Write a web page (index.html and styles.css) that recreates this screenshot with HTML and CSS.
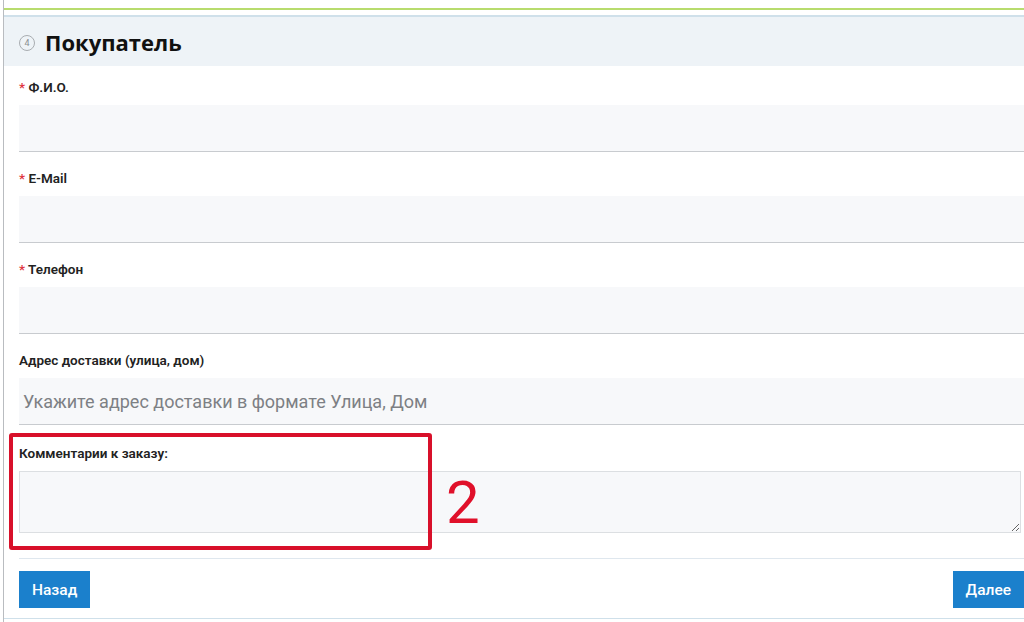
FILE: index.html
```html
<!DOCTYPE html>
<html lang="ru">
<head>
    <meta charset="UTF-8">
    <meta name="viewport" content="width=device-width, initial-scale=1.0">
    <title>Покупатель</title>
    <link rel="stylesheet" href="styles.css">
</head>
<body>
    <div class="page">
        <div class="top-strip"></div>

        <div class="section">
            <div class="section-head">
                <span class="step">4</span>
                <h2>Покупатель</h2>
            </div>

            <div class="form">
                <div class="field">
                    <label><span class="req">*</span> Ф.И.О.</label>
                    <input type="text">
                </div>
                <div class="field">
                    <label><span class="req">*</span> E-Mail</label>
                    <input type="text">
                </div>
                <div class="field">
                    <label><span class="req">*</span> Телефон</label>
                    <input type="text">
                </div>
                <div class="field">
                    <label>Адрес доставки (улица, дом)</label>
                    <input type="text" placeholder="Укажите адрес доставки в формате Улица, Дом">
                </div>
                <div class="field comment">
                    <label>Комментарии к заказу:</label>
                    <textarea></textarea>
                    <!-- пометка на скриншоте -->
                    <div class="mark"></div>
                    <div class="mark-num">2</div>
                </div>
            </div>

            <div class="actions">
                <button>Назад</button>
                <button>Далее</button>
            </div>
        </div>
    </div>
</body>
</html>
```

FILE: styles.css
```css
body {
    margin: 0;
    font-family: Roboto, "Open Sans", Arial, sans-serif;
    color: #222;
    background: #fff;
    overflow: hidden;
}
.page {
    margin-left: 3px;
    border-left: 1px solid #b9bcc0;
    min-height: 622px;
}
.top-strip {
    height: 8px;
    border-bottom: 2px solid #b8dc6e;
}
.section {
    margin-top: 5px;
    border-top: 2px solid #cfe0ea;
}
.section-head {
    display: flex;
    align-items: center;
    height: 49px;
    padding-left: 15px;
    background-color: #eef3f7;
}
.step {
    display: inline-flex;
    align-items: center;
    justify-content: center;
    width: 14px;
    height: 14px;
    border: 1.5px solid #a9adb1;
    border-radius: 50%;
    font-size: 9px;
    color: #8a8e92;
    margin-right: 10px;
    margin-top: 2px;
}
.section-head h2 {
    margin: 0;
    font-family: "Open Sans", Arial, sans-serif;
    font-size: 22px;
    font-weight: 700;
    color: #111;
}
.form {
    padding: 0 0 0 15px;
}
.field {
    position: relative;
    padding-top: 17px;
}
.field:first-child {
    padding-top: 12px;
}
.field label {
    display: block;
    height: 18px;
    line-height: 18px;
    margin-bottom: 9px;
    font-size: 13.5px;
    font-weight: 600;
    color: #222;
}
.req {
    color: #e0353f;
}
.field input {
    display: block;
    box-sizing: border-box;
    width: 100%;
    height: 47px;
    border: none;
    border-bottom: 1px solid #c8cbcf;
    background-color: #f7f8fa;
    padding: 0 4px;
    font-family: Roboto, Arial, sans-serif;
    font-size: 18px;
}
.field input::placeholder {
    color: #7d8084;
}
.field textarea {
    display: block;
    box-sizing: border-box;
    width: calc(100% - 3px);
    height: 62px;
    border: 1px solid #dcdfe2;
    background-color: #f7f8fa;
    margin: 0;
}
.comment {
    padding-top: 19px;
    padding-bottom: 25px;
    border-bottom: 1px solid #dfe7ee;
}
.mark {
    position: absolute;
    left: -10px;
    top: 8px;
    width: 415px;
    height: 109px;
    border: 4px solid #d8102a;
    border-radius: 3px;
}
.mark-num {
    position: absolute;
    left: 427px;
    top: 48px;
    font-size: 60px;
    line-height: 60px;
    color: #e0102a;
}
.actions {
    display: flex;
    justify-content: space-between;
    padding: 12px 0 10px 15px;
    border-bottom: 1px solid #cfe0ea;
}
.actions button {
    height: 37px;
    padding: 0 13px;
    border: none;
    background-color: #1b80cc;
    color: #fff;
    font-family: Roboto, Arial, sans-serif;
    font-size: 15.5px;
    font-weight: 500;
    cursor: pointer;
}
```
